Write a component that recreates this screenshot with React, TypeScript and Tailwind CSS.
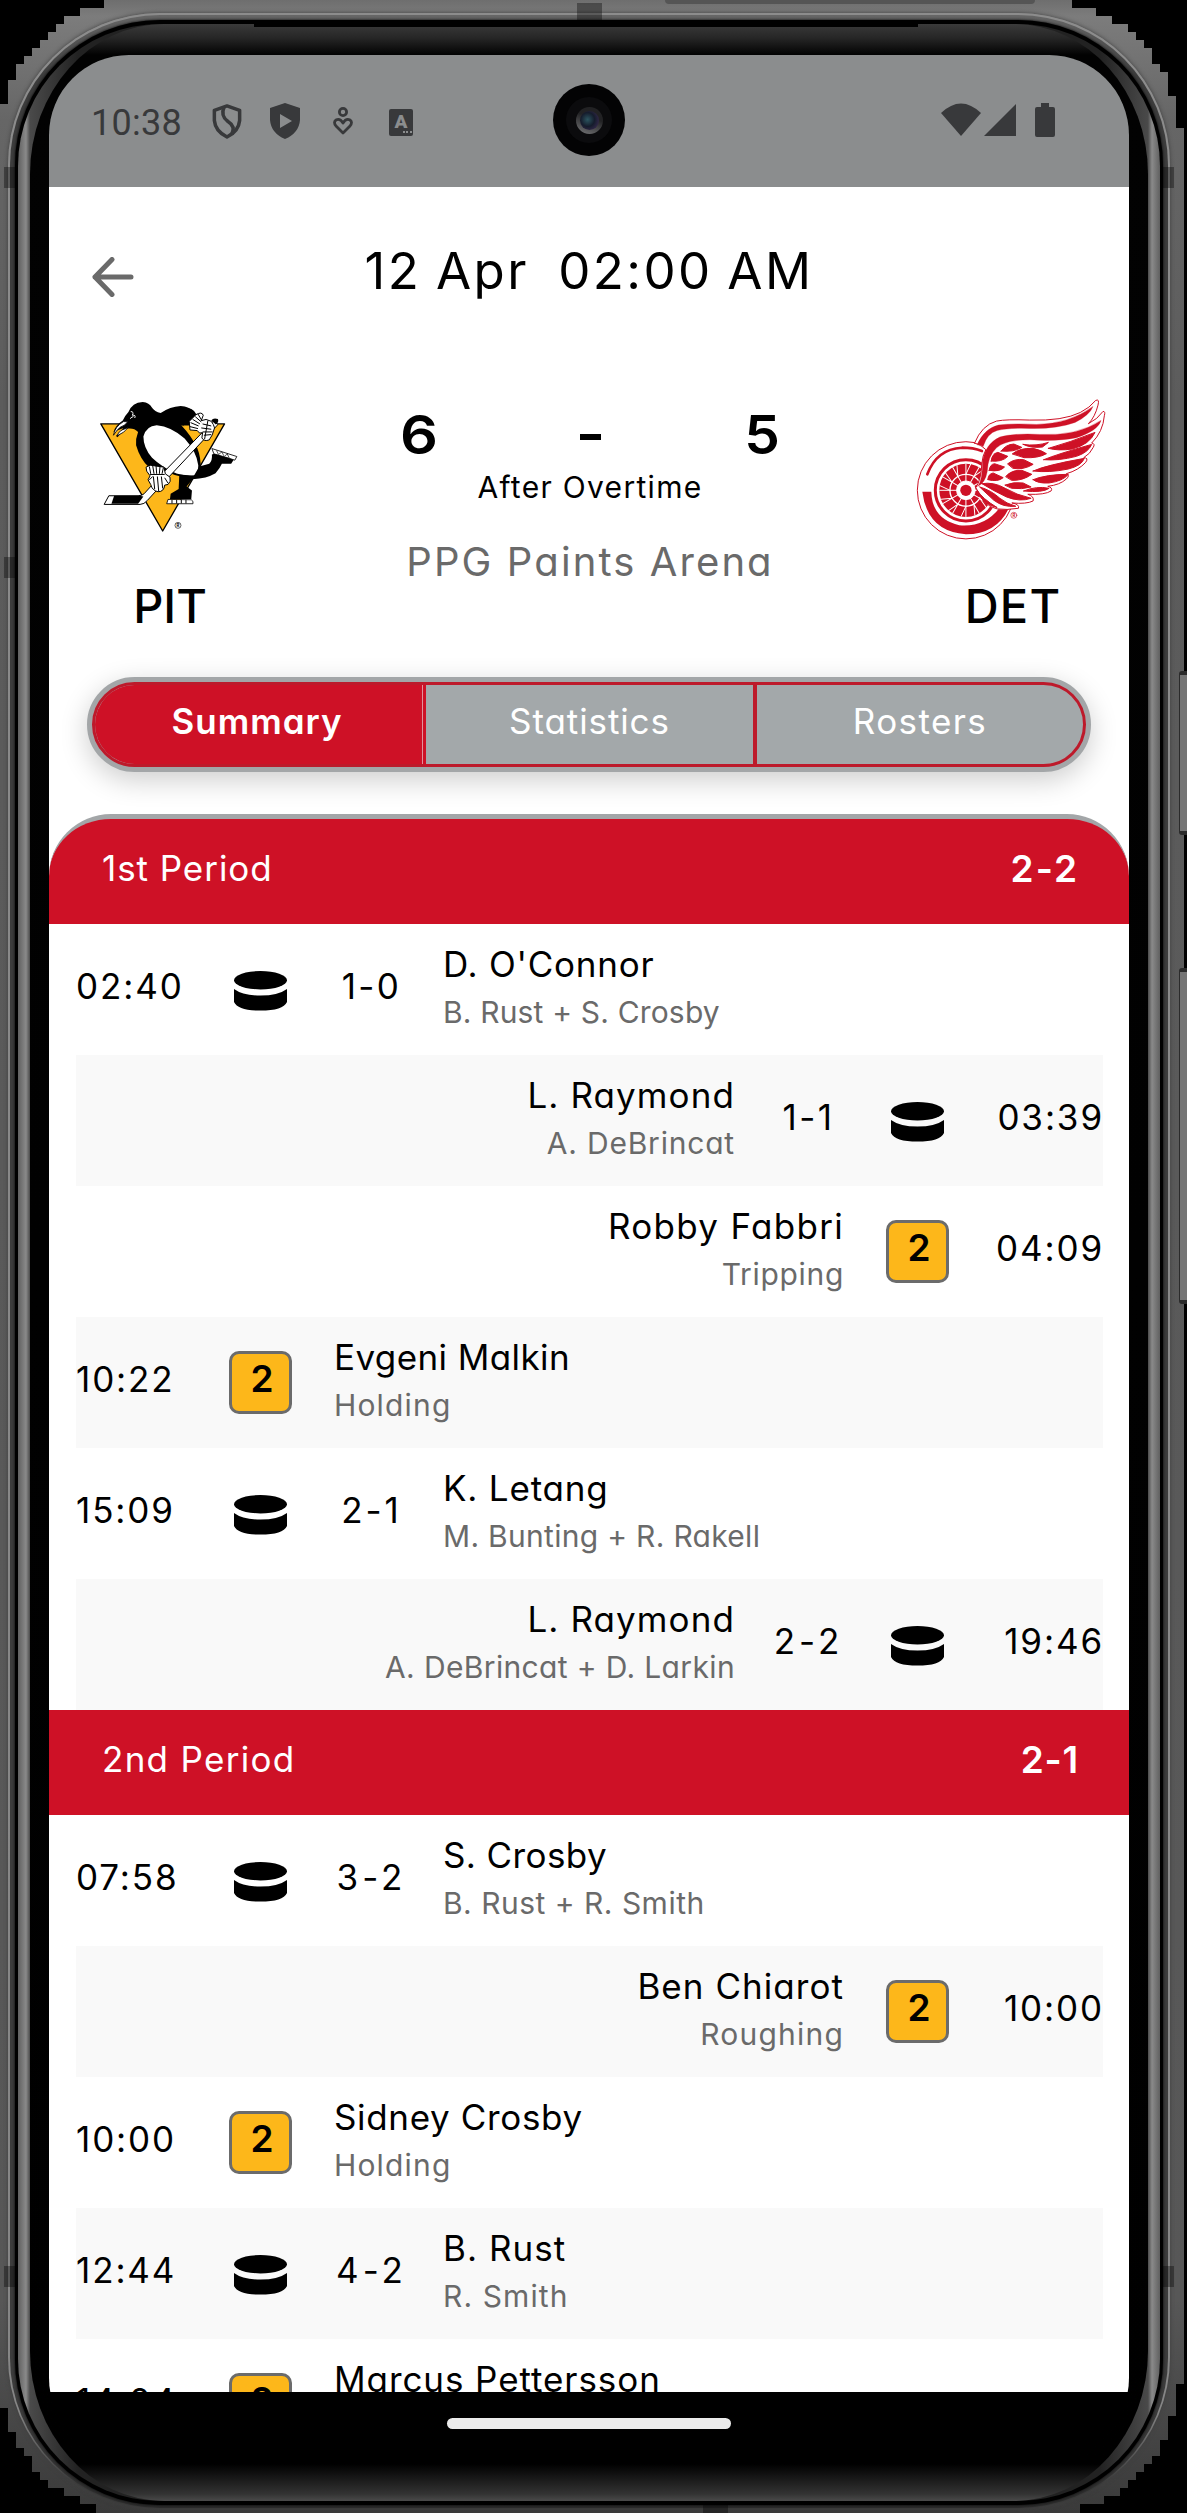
import React from "react";

type GameEvent = {
  side: "home" | "away";
  time: string;
  name: string;
  detail: string;
  score?: string;
  nameSpacing: string;
  detailSpacing: string;
  scoreSpacing?: string;
};

const firstPeriod: GameEvent[] = [
  { side: "home", time: "02:40", score: "1-0", name: "D. O'Connor", detail: "B. Rust + S. Crosby", nameSpacing: "tracking-[0.77px]", detailSpacing: "tracking-[0.17px]", scoreSpacing: "tracking-[2.4px]" },
  { side: "away", time: "03:39", score: "1-1", name: "L. Raymond", detail: "A. DeBrincat", nameSpacing: "tracking-[1.1px]", detailSpacing: "tracking-[0.8px]", scoreSpacing: "tracking-[2.4px]" },
  { side: "away", time: "04:09", name: "Robby Fabbri", detail: "Tripping", nameSpacing: "tracking-[1.3px]", detailSpacing: "tracking-[0.69px]" },
  { side: "home", time: "10:22", name: "Evgeni Malkin", detail: "Holding", nameSpacing: "tracking-[0.4px]", detailSpacing: "tracking-[1.17px]" },
  { side: "home", time: "15:09", score: "2-1", name: "K. Letang", detail: "M. Bunting + R. Rakell", nameSpacing: "tracking-[0.8px]", detailSpacing: "tracking-[0.3px]", scoreSpacing: "tracking-[3px]" },
  { side: "away", time: "19:46", score: "2-2", name: "L. Raymond", detail: "A. DeBrincat + D. Larkin", nameSpacing: "tracking-[1.1px]", detailSpacing: "tracking-[0.36px]", scoreSpacing: "tracking-[4px]" },
];

const secondPeriod: GameEvent[] = [
  { side: "home", time: "07:58", score: "3-2", name: "S. Crosby", detail: "B. Rust + R. Smith", nameSpacing: "tracking-[0.4px]", detailSpacing: "tracking-[0.49px]", scoreSpacing: "tracking-[4px]" },
  { side: "away", time: "10:00", name: "Ben Chiarot", detail: "Roughing", nameSpacing: "tracking-[1.05px]", detailSpacing: "tracking-[1.2px]" },
  { side: "home", time: "10:00", name: "Sidney Crosby", detail: "Holding", nameSpacing: "tracking-[0.65px]", detailSpacing: "tracking-[1.17px]" },
  { side: "home", time: "12:44", score: "4-2", name: "B. Rust", detail: "R. Smith", nameSpacing: "tracking-[1.04px]", detailSpacing: "tracking-[1.1px]", scoreSpacing: "tracking-[4px]" },
  { side: "home", time: "14:04", name: "Marcus Pettersson", detail: "Interference", nameSpacing: "tracking-[0.92px]", detailSpacing: "tracking-[1px]" },
];

function PuckIcon() {
  return (
    <svg viewBox="0 0 53 40" className="mt-[3px] h-10 w-[53px]" fill="#000">
      <ellipse cx="26.5" cy="9.2" rx="26.5" ry="9.2" />
      <path d="M0 18 Q9 24.6 26.5 24.6 Q44 24.6 53 18 V31 Q49 39.6 26.5 39.6 Q4 39.6 0 31 Z" />
    </svg>
  );
}

function EventMark({ penalty }: { penalty: boolean }) {
  return (
    <div className="flex h-[63px] w-[63px] shrink-0 items-center justify-center">
      {penalty ? (
        <div className="h-[63px] w-[63px] rounded-[10px] border-[3px] border-[#6b6b6b] bg-[#fdb71a] pl-[3px] text-center text-[37px] leading-[50px] font-semibold">2</div>
      ) : (
        <PuckIcon />
      )}
    </div>
  );
}

function EventRow({ event, shaded }: { event: GameEvent; shaded: boolean }) {
  const away = event.side === "away";
  return (
    <div
      className={`mr-[26px] ml-[27px] flex h-[131px] shrink-0 items-center text-[35px] whitespace-nowrap ${away ? "flex-row-reverse text-right" : ""} ${shaded ? "bg-[#f9f9f9]" : "bg-white"}`}
    >
      <div className={`shrink-0 pb-[7px] tracking-[1.9px] ${away ? "-mr-px w-[155px]" : "w-[153px]"}`}>{event.time}</div>
      <EventMark penalty={!event.score} />
      {event.score ? (
        <div className={`w-[151px] shrink-0 pb-[7px] text-center ${event.scoreSpacing} ${away ? "pr-1" : "pl-2"}`}>{event.score}</div>
      ) : (
        <div className="w-[42px] shrink-0" />
      )}
      <div className="pb-[2px] leading-[47px]">
        <div className={event.nameSpacing}>{event.name}</div>
        <div className={`text-[30px] leading-[49px] text-[#6a6a6a] ${event.detailSpacing}`}>{event.detail}</div>
      </div>
    </div>
  );
}

function PenguinLogo() {
  return (
    <svg viewBox="55 65 420 400" className="h-[133px] w-[140px]" strokeLinejoin="round">
      <path d="M60 134 H432 L246 456 Z" fill="#fdb71a" stroke="#000" strokeWidth="4" />
      {/* body and head */}
      <path d="M98 158 Q105 138 126 124 Q133 108 143 98 Q154 70 186 68 Q206 70 213 84 Q222 98 240 101 Q268 82 300 80 Q326 82 340 98 L352 116 L336 150 L302 138 Q332 170 350 206 Q362 236 360 270 Q352 292 324 296 Q282 292 252 274 L206 266 Q178 240 166 198 Q164 178 172 158 Q160 146 142 148 Q130 152 110 174 L106 170 L128 146 Z" fill="#000" />
      {/* belly */}
      <path d="M188 172 Q196 140 228 138 Q272 142 312 178 Q348 218 353 258 Q354 286 338 289 Q304 292 276 278 Q242 262 214 236 Q188 206 188 172 Z" fill="#fff" />
      {/* beak and eye */}
      <path d="M98 168 Q102 142 128 127 L141 127 Q134 139 118 144 Q108 152 98 168 Z" fill="#fff" stroke="#000" strokeWidth="2.5" />
      <path d="M108 170 Q114 156 124 152 L142 145 Q132 160 108 170 Z" fill="#fff" stroke="#000" strokeWidth="2.5" />
      <path d="M150 97 Q160 96 155 108 Q166 106 162 116 M148 118 Q154 112 158 112" fill="none" stroke="#fff" strokeWidth="3" />
      {/* raised arm */}
      <path d="M300 84 Q340 84 348 106 L330 148 Q300 140 296 110 Z" fill="#000" />
      <path d="M308 139 H326 L336 154 L324 158 Z" fill="#fdb71a" />
      {/* legs */}
      <path d="M296 286 L294 330 L270 344 L268 360 H332 L334 334 L318 322 L336 300 Q378 298 405 282 Q418 268 424 254 L452 254 L462 238 L406 222 L394 226 Q396 244 386 254 L356 262 L340 290 Z" fill="#000" />
      {/* skates */}
      <path d="M262 361 L332 362 L337 367 V374 H258 Z" fill="#fff" stroke="#000" strokeWidth="2.5" />
      <path d="M274 362 v11 M288 362 v11 M302 362 v11 M316 362 v11" stroke="#000" strokeWidth="3" />
      <path d="M394 208 L469 232 L463 243 L442 236 L400 224 Z" fill="#fff" stroke="#000" strokeWidth="2.5" />
      <path d="M408 214 l6 12 M424 218 l6 12 M440 224 l6 12 M414 226 l10-8 M432 231 l10-8" stroke="#000" strokeWidth="2" />
      {/* stick */}
      <path d="M400 124 L254 274 L190 344 Q184 350 172 350 H84 L70 376 H178 Q190 376 200 364 L266 292 L412 136 Z" fill="#fff" stroke="#000" strokeWidth="3" />
      <path d="M100 350 H176 L188 352 L172 374 H92 Z" fill="#000" />
      <path d="M392 124 Q398 114 412 119 Q416 128 406 136 Z" fill="#000" />
      {/* gloves */}
      <path d="M326 126 L346 106 Q364 96 368 108 L362 124 Q376 116 392 126 Q400 136 402 146 Q396 170 386 182 Q370 188 364 176 L366 160 Q356 166 350 154 L328 152 Z" fill="#fff" stroke="#000" strokeWidth="3" />
      <path d="M330 130 L354 140 M336 120 L358 134 M344 112 L362 128 M352 104 L364 124 M328 142 L352 148 M366 134 L392 140 M362 146 L392 150 M366 158 L396 158 M370 168 L392 166 M382 124 L372 180" stroke="#000" strokeWidth="3" fill="none" />
      <path d="M196 264 L208 258 L250 264 L254 284 L268 294 Q272 308 262 316 L252 318 Q250 338 232 338 Q214 334 210 316 L202 302 L208 290 L198 276 Z" fill="#fff" stroke="#000" strokeWidth="3" />
      <path d="M206 262 L210 284 M216 260 L220 284 M226 260 L228 284 M238 262 L236 284 M248 266 L244 284 M208 286 H252 M218 292 L222 330 M230 292 L234 336 M242 292 L246 328 M206 302 L216 292 M252 296 L262 312" stroke="#000" strokeWidth="3" fill="none" />
      <circle cx="292" cy="439" r="9" fill="none" stroke="#000" strokeWidth="1.8" />
      <text x="292" y="444" fontSize="13" textAnchor="middle" fontFamily="Inter" fontWeight="700">R</text>
    </svg>
  );
}

const spokes = [0, 30, 60, 90, 120, 150, 180, 210, 240, 270, 300, 330];

function WingedWheelLogo() {
  return (
    <svg viewBox="75 55 577 432" className="h-[144px] w-[192px]" strokeLinejoin="round" strokeLinecap="round">
      <g fill="none" stroke="#ce1126">
        <circle cx="228" cy="332" r="146" strokeWidth="3" fill="#fff" />
        {/* tyre */}
        <path d="M97 336 H124 Q126 418 208 437 Q284 444 330 384 L356 388 Q318 464 228 464 Q112 456 97 336 Z" fill="#ce1126" stroke="none" />
        <path d="M112 284 Q140 208 216 204 Q250 204 276 214" strokeWidth="8" />
        <circle cx="228" cy="332" r="92" strokeWidth="9" />
        <circle cx="228" cy="332" r="80" fill="#ce1126" stroke="none" />
      </g>
      {/* rim */}
      <g fill="none" stroke="#fff" strokeWidth="3">
        {spokes.map((a) => (
          <path key={a} d="M228 332 L228 253 M228 284 L242 254" transform={`rotate(${a} 228 332)`} />
        ))}
        <circle cx="228" cy="332" r="48" strokeWidth="4" />
        <circle cx="228" cy="332" r="28" fill="#fff" />
      </g>
      <circle cx="228" cy="332" r="17" fill="#ce1126" />
      {/* wing outline */}
      <path
        d="M254 190 Q276 136 320 124 Q350 118 420 121 Q520 124 572 98 Q600 84 618 62 Q630 56 625 76 Q616 112 596 132 Q624 118 640 95 Q648 94 644 108 Q640 156 606 190 Q618 192 610 204 Q602 222 582 234 Q598 234 588 248 Q566 272 530 282 Q542 286 530 298 Q510 316 474 320 Q490 324 484 334 Q466 346 414 344 Q434 350 430 364 Q410 374 366 370 Q390 374 386 386 Q350 392 322 388 Q280 380 258 324 Q274 300 276 250 Q278 228 288 210 Q272 192 254 190 Z"
        fill="#fff"
        stroke="#ce1126"
        strokeWidth="3"
      />
      <g fill="#ce1126" stroke="#ce1126" strokeWidth="3">
        <path strokeWidth="1" d="M262 194 Q284 146 326 136 Q370 130 440 134 Q540 132 610 80 Q600 106 556 128 Q500 148 420 146 Q356 144 322 152 Q292 160 280 200 Z" />
        <path strokeWidth="1" d="M264 320 Q278 300 278 246 Q286 192 330 172 Q372 160 450 164 Q560 170 634 122 Q626 152 560 174 Q500 186 420 180 Q346 180 320 204 Q294 228 292 276 Q286 310 264 320 Z" />
        {/* feathers */}
        <path d="M334 214 Q348 194 372 193 L396 203 Q372 218 334 214 Z" />
        <path d="M400 194 Q440 200 476 188 L458 202 Q424 206 400 194 Z" />
        <path d="M476 206 Q540 188 616 158 Q600 194 548 208 Q504 214 476 206 Z" />
        <path d="M304 244 Q306 222 324 218 L354 230 Q336 248 304 244 Z" />
        <path d="M368 222 Q390 204 430 206 Q456 212 470 222 Q446 236 404 234 Z" />
        <path d="M462 240 Q500 224 606 194 Q596 218 560 230 Q506 244 462 240 Z" />
        <path d="M298 272 Q300 254 314 252 L344 262 Q330 278 298 272 Z" />
        <path d="M354 252 Q374 236 402 240 L430 254 Q400 272 370 266 Z" />
        <path d="M430 274 Q470 256 584 236 Q576 258 536 268 Q478 280 430 274 Z" />
        <path d="M294 298 Q296 282 310 280 L340 294 Q324 308 294 300 Z" />
        <path d="M348 290 Q366 270 396 272 L426 284 Q398 304 366 302 Z" />
        <path d="M430 300 Q470 284 536 284 Q520 304 478 310 Q444 312 430 300 Z" />
        <path d="M276 312 Q312 306 346 326 Q380 346 424 356 Q390 368 350 352 Q312 334 276 312 Z" />
        <path d="M346 316 Q372 306 400 310 L424 322 Q396 330 366 326 Z" />
        <path d="M402 334 Q440 318 478 326 Q460 340 402 334 Z" />
        <path d="M270 322 Q304 332 330 356 Q350 372 378 380 Q340 384 312 362 Z" />
        <path d="M262 332 Q276 356 322 384 Q276 374 262 332 Z" />
      </g>
      <circle cx="372" cy="407" r="9" fill="none" stroke="#ce1126" strokeWidth="1.8" />
      <text x="372" y="412" fontSize="13" textAnchor="middle" fontFamily="Inter" fontWeight="700" fill="#ce1126">R</text>
    </svg>
  );
}

function StatusBar() {
  return (
    <div className="relative flex h-[132px] shrink-0 items-center bg-[#8b8d8e] pl-[42px] text-[#38393b]">
      <span className="w-[121px] pt-[3px] font-[Roboto] text-[36px] leading-none tracking-[0.3px]">10:38</span>
      <svg viewBox="0 0 30 36" className="h-[35px] w-[30px]" fill="none" stroke="currentColor" strokeWidth="3.6">
        <path d="M15 2 L28 6.5 V17 Q27 28 15 34 Q3 28 2 17 V6.5 Z" strokeLinejoin="round" />
        <path d="M12 3 Q8 12 16 18 Q24 23 20 31" />
      </svg>
      <svg viewBox="0 0 30 36" className="ml-7 h-9 w-[30px]" fill="currentColor">
        <path fillRule="evenodd" d="M15 0 L30 5 V17 Q29 30 15 36 Q1 30 0 17 V5 Z M10 11 V25 L22 18 Z" />
      </svg>
      <svg viewBox="0 0 20 28" className="ml-[33px] h-[28px] w-5" fill="none" stroke="currentColor" strokeWidth="2.8">
        <circle cx="10" cy="5" r="3.6" />
        <path d="M10 26 L3 19 Q0 15 3 13 Q7 11 10 16 Q13 11 17 13 Q20 15 17 19 Z" strokeLinejoin="round" />
      </svg>
      <div className="mt-[2px] ml-9 flex h-[27px] w-6 flex-col items-center rounded-[2px] bg-[#38393b] text-[#8b8d8e]">
        <span className="font-[Roboto] text-[19px] leading-[25px] font-black">A</span>
        <span className="-mt-[3px] ml-3 flex gap-[1.5px]">
          <i className="h-[2px] w-[2px] bg-[#8b8d8e]" />
          <i className="h-[2px] w-[2px] bg-[#8b8d8e]" />
          <i className="h-[2px] w-[2px] bg-[#8b8d8e]" />
        </span>
      </div>
      <svg viewBox="0 0 116 36" className="mr-[72px] ml-auto h-9 w-[116px]" fill="currentColor">
        <path d="M0 10 Q20 -9 40 10 L20 33 Z" />
        <path d="M43 33 L75 1 V33 Z" />
        <path d="M100 0 h8 v4 h4 q2 0 2 2 v26 q0 2 -2 2 h-16 q-2 0 -2 -2 v-26 q0 -2 2 -2 h4 Z" />
      </svg>
      {/* front camera */}
      <div className="absolute top-[29px] left-[504px] flex h-[72px] w-[72px] items-center justify-center rounded-full bg-[#030304]">
        <div className="flex h-[46px] w-[46px] items-center justify-center rounded-full bg-[#0b0b0d]">
          <div className="flex h-[27px] w-[27px] items-center justify-center rounded-full bg-[linear-gradient(20deg,#77787a,#222224_60%)]">
            <div className="h-[19px] w-[19px] rounded-full bg-[radial-gradient(circle_at_40%_45%,#2c5560_0%,#151c2c_45%,#3a2a50_85%)]" />
          </div>
        </div>
      </div>
    </div>
  );
}

function PeriodHeader({ title, score, spacing, scoreSpacing, first }: { title: string; score: string; spacing: string; scoreSpacing: string; first?: boolean }) {
  return (
    <div
      className={`flex shrink-0 items-center justify-between bg-[#ce1126] pr-[50px] pb-[6px] pl-[53px] text-[35px] text-white ${first ? "h-[110px] rounded-t-[62px] border-t-[5px] border-[#a3a6a8]" : "h-[105px]"}`}
    >
      <span className={spacing}>{title}</span>
      <span className={`text-[37px] font-semibold ${scoreSpacing}`}>{score}</span>
    </div>
  );
}

function AppContent() {
  return (
    <div className="flex h-[2205px] shrink-0 flex-col overflow-hidden bg-white text-black">
      <div className="relative flex h-[167px] shrink-0 items-center justify-center">
        <svg viewBox="0 0 42 40" className="absolute top-[70px] left-[43px] h-10 w-[42px]" fill="none" stroke="#6a6a6a" strokeWidth="5" strokeLinecap="round" strokeLinejoin="round">
          <path d="M20 2.5 L3 20 L20 37.5 M3 20 H39" />
        </svg>
        <h1 className="text-[51px] leading-none tracking-[2.4px] whitespace-pre [word-spacing:-2px]">12 Apr&nbsp; 02:00 AM</h1>
      </div>

      <div className="flex h-[323px] shrink-0">
        <div className="flex w-[240px] flex-col items-center pt-[47px]">
          <PenguinLogo />
          <div className="pt-[42px] pl-[2px] text-[47px] leading-[60px] font-medium">PIT</div>
        </div>
        <div className="flex flex-1 flex-col items-center pt-[50px]">
          <div className="flex h-[60px] w-[403px] items-center justify-between text-center text-[54px] font-semibold">
            <span className="w-[60px] scale-x-110">6</span>
            <span className="mt-[5px] h-[6px] w-[21px] bg-black" />
            <span className="w-[60px] scale-x-105">5</span>
          </div>
          <div className="text-[30px] leading-[47px] tracking-[1.3px]">After Overtime</div>
          <div className="text-[40px] leading-[101px] tracking-[2.1px] text-[#6a6a6a]">PPG Paints Arena</div>
        </div>
        <div className="flex w-[238px] flex-col items-center pt-[44px] pl-[2px]">
          <WingedWheelLogo />
          <div className="pt-[34px] pl-[4px] text-[47px] leading-[60px] font-medium tracking-[1.2px]">DET</div>
        </div>
      </div>

      <div className="mx-[38px] h-[95px] shrink-0 rounded-full border-[5px] border-[#a3a6a8] bg-[#a3a8aa] shadow-[0_8px_28px_rgba(0,0,0,0.2)]">
        <div className="flex h-full overflow-hidden rounded-full border-[3px] border-[#bd1a2b] bg-[#a3a8aa] text-center text-[35px] leading-[73px] text-white">
          <div className="-m-[3px] w-[334px] border-r-[3px] border-[#ce1126] bg-[#ce1126] pt-[3px]">
            <div className="h-full border-r border-[#e2919b] font-semibold tracking-[1px]">Summary</div>
          </div>
          <div className="ml-[3px] w-[327px] tracking-[0.9px]">Statistics</div>
          <div className="flex-1 border-l-4 border-[#bd1a2b] tracking-[1.4px]">Rosters</div>
        </div>
      </div>

      <div className="mt-[42px] flex flex-col">
        <PeriodHeader title="1st Period" score="2-2" spacing="tracking-[0.94px]" scoreSpacing="tracking-[2px]" first />
        {firstPeriod.map((e, i) => (
          <EventRow key={i} event={e} shaded={i % 2 === 1} />
        ))}
        <PeriodHeader title="2nd Period" score="2-1" spacing="tracking-[1.3px]" scoreSpacing="tracking-[0.8px]" />
        {secondPeriod.map((e, i) => (
          <EventRow key={i} event={e} shaded={i % 2 === 1} />
        ))}
      </div>
    </div>
  );
}

export default function App() {
  return (
    <div className="relative h-[2513px] w-[1187px] overflow-hidden bg-black font-['Inter',sans-serif] [font-feature-settings:'cv11']">
      <div className="relative h-[2513px] w-[1187px] bg-[linear-gradient(180deg,#6e6e6e_0,#7c7c7c_16px,#666_120px,#5c5c5c_400px,#575757_2300px,#3a3a3a_2513px)] pt-[13px] pr-[17px] pb-[4px] pl-[8px] [clip-path:polygon(104px_0,104px_8px,80px_8px,80px_16px,64px_16px,64px_24px,56px_24px,56px_32px,48px_32px,48px_40px,40px_40px,40px_48px,32px_48px,32px_56px,24px_56px,24px_64px,16px_64px,16px_80px,8px_80px,8px_104px,0_104px,0_2408px,8px_2408px,8px_2432px,16px_2432px,16px_2448px,24px_2448px,24px_2456px,32px_2456px,32px_2472px,40px_2472px,40px_2480px,48px_2480px,48px_2488px,64px_2488px,64px_2496px,80px_2496px,80px_2504px,96px_2504px,96px_2513px,1080px_2513px,1080px_2504px,1104px_2504px,1104px_2496px,1120px_2496px,1120px_2488px,1128px_2488px,1128px_2480px,1136px_2480px,1136px_2472px,1144px_2472px,1144px_2464px,1152px_2464px,1152px_2456px,1160px_2456px,1160px_2440px,1168px_2440px,1168px_2416px,1176px_2416px,1176px_2384px,1184px_2384px,1184px_128px,1176px_128px,1176px_96px,1168px_96px,1168px_72px,1160px_72px,1160px_64px,1152px_64px,1152px_48px,1144px_48px,1144px_40px,1136px_40px,1136px_32px,1128px_32px,1128px_24px,1112px_24px,1112px_16px,1096px_16px,1096px_8px,1072px_8px,1072px_0)]">
        {/* metal rim */}
        <div className="rounded-[152px] bg-[linear-gradient(180deg,#8c8c8c,#868686_96%,#3a3a3a_99%)] px-[2px] pt-[2px] pb-px shadow-[0_0_4px_0_#3f3f3f]">
          <div className="rounded-[150px] bg-[linear-gradient(180deg,#666_0,#3c3c3c_60px,#3c3c3c_96%,#2c2c2c)] px-[5px] pt-[5px] pb-[3px]">
            <div className="rounded-[145px] bg-black px-[3px] pt-[4px] pb-[4px] shadow-[0_0_3px_0_#000]">
              <div className="relative rounded-[142px] bg-[linear-gradient(90deg,#606060_0,#8a8a8a_8px,#4a4a4a_12px,#222_60px,#222_1082px,#4a4a4a_1130px,#8a8a8a_1134px,#606060_1142px)] px-[12px]">
                {/* glass */}
                <div className="rounded-[134px/150px] bg-[linear-gradient(180deg,#3a3a3a_0,#262626_14px,#020202_31px,#000_2440px,#333_2470px,#4a4a4a_2477px)] px-[19px] pt-[31px] pb-[43px]">
                  <div className="flex h-[2403px] w-[1080px] flex-col overflow-hidden rounded-[80px] bg-black">
                    <StatusBar />
                    <AppContent />
                    <div className="flex h-[66px] items-center justify-center pb-[3px]">
                      <div className="h-[11px] w-[284px] rounded-full bg-[#ebebeb]" />
                    </div>
                  </div>
                </div>
                {/* earpiece slit */}
                <div className="absolute top-0 left-[236px] h-[3px] w-[664px] bg-black" />
              </div>
            </div>
          </div>
        </div>
        {/* antenna breaks */}
        <div className="absolute top-0 left-[665px] h-1 w-[370px] rounded-b-md bg-[#555]" />
        <div className="absolute top-[3px] left-[577px] h-[17px] w-[25px] bg-black/35" />
        <div className="absolute right-[459px] bottom-0 h-[8px] w-[25px] bg-black/35" />
        <div className="absolute top-[167px] left-[4px] h-[21px] w-[11px] bg-black/35" />
        <div className="absolute top-[167px] left-[1163px] h-[21px] w-[11px] bg-black/35" />
        <div className="absolute top-[557px] left-[4px] h-[21px] w-[11px] bg-black/35" />
        <div className="absolute top-[2266px] left-[4px] h-[21px] w-[11px] bg-black/35" />
        <div className="absolute top-[2266px] left-[1163px] h-[21px] w-[11px] bg-black/35" />
      </div>
      {/* side buttons */}
      <div className="absolute top-[671px] left-[1179px] h-[164px] w-2 rounded-l-[3px] border-y-[4px] border-l border-[#2b2b2b] bg-[#757575]" />
      <div className="absolute top-[968px] left-[1179px] h-[336px] w-2 rounded-l-[3px] border-y-[4px] border-l border-[#2b2b2b] bg-[#757575]" />
    </div>
  );
}
